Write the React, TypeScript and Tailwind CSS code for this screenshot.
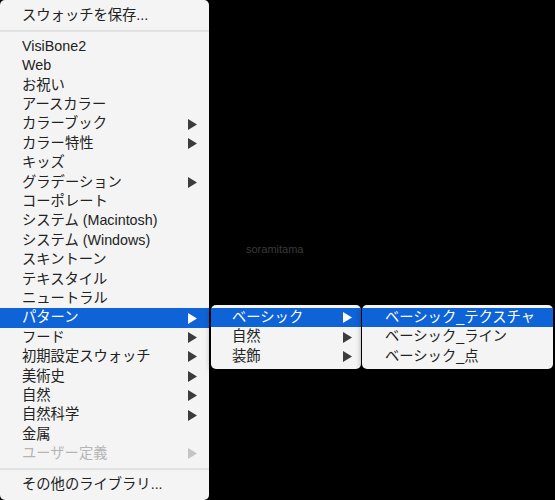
import React from "react";

type Item = { label: string; sub?: boolean; active?: boolean; disabled?: boolean };

const font = { fontFamily: '"Liberation Sans", "Noto Sans CJK JP", sans-serif' };

const libraries: Item[] = [
  { label: "VisiBone2" },
  { label: "Web" },
  { label: "お祝い" },
  { label: "アースカラー" },
  { label: "カラーブック", sub: true },
  { label: "カラー特性", sub: true },
  { label: "キッズ" },
  { label: "グラデーション", sub: true },
  { label: "コーポレート" },
  { label: "システム (Macintosh)" },
  { label: "システム (Windows)" },
  { label: "スキントーン" },
  { label: "テキスタイル" },
  { label: "ニュートラル" },
  { label: "パターン", sub: true, active: true },
  { label: "フード", sub: true },
  { label: "初期設定スウォッチ", sub: true },
  { label: "美術史", sub: true },
  { label: "自然", sub: true },
  { label: "自然科学", sub: true },
  { label: "金属" },
  { label: "ユーザー定義", sub: true, disabled: true },
];

function Arrow({ color }: { color: string }) {
  return (
    <svg width="9" height="11" viewBox="0 0 9 11" className="shrink-0">
      <path d="M0 0 L9 5.5 L0 11 Z" fill={color} />
    </svg>
  );
}

function Row({ item, pl, arrowRight }: { item: Item; pl: string; arrowRight: string }) {
  const color = item.active ? "text-white" : item.disabled ? "text-[#b4b4b4]" : "text-[#222222]";
  return (
    <div
      className={`flex items-center justify-between h-[19.4px] text-[14.3px] leading-[19.4px] ${pl} ${arrowRight} ${
        item.active ? "bg-[#0e63d7]" : ""
      } ${color}`}
    >
      <span className="whitespace-nowrap">{item.label}</span>
      {item.sub && <Arrow color={item.active ? "#ffffff" : item.disabled ? "#c4c4c4" : "#3c3c3c"} />}
    </div>
  );
}

function Separator() {
  return (
    <div className="h-[12px] flex items-center">
      <div className="h-[2px] w-full bg-[#e2e2e2]" />
    </div>
  );
}

export default function App() {
  return (
    <div className="relative w-[555px] h-[500px] bg-black overflow-hidden" style={font}>
      <div className="w-[209px] h-[500px] bg-[#f4f4f4] rounded-[5px] pt-[5.5px]">
        <Row item={{ label: "スウォッチを保存..." }} pl="pl-[22px]" arrowRight="pr-[12px]" />
        <Separator />
        {libraries.map((it) => (
          <Row key={it.label} item={it} pl="pl-[22px]" arrowRight="pr-[12px]" />
        ))}
        <Separator />
        <Row item={{ label: "その他のライブラリ..." }} pl="pl-[22px]" arrowRight="pr-[12px]" />
      </div>

      <div className="absolute left-[246px] top-[241px] text-[11px] text-[#3a3a3a]">soramitama</div>

      <div className="absolute left-[211px] top-[305px] w-[150px] h-[64px] bg-[#f4f4f4] rounded-[5px] pt-[3px] shadow-[0_2px_6px_rgba(0,0,0,0.4)]">
        <Row item={{ label: "ベーシック", sub: true, active: true }} pl="pl-[21px]" arrowRight="pr-[9px]" />
        <Row item={{ label: "自然", sub: true }} pl="pl-[21px]" arrowRight="pr-[9px]" />
        <Row item={{ label: "装飾", sub: true }} pl="pl-[21px]" arrowRight="pr-[9px]" />
      </div>

      <div className="absolute left-[362px] top-[305px] w-[191px] h-[64px] bg-[#f4f4f4] rounded-[5px] pt-[3px] shadow-[0_2px_6px_rgba(0,0,0,0.4)]">
        <Row item={{ label: "ベーシック_テクスチャ", active: true }} pl="pl-[23px]" arrowRight="pr-[9px]" />
        <Row item={{ label: "ベーシック_ライン" }} pl="pl-[23px]" arrowRight="pr-[9px]" />
        <Row item={{ label: "ベーシック_点" }} pl="pl-[23px]" arrowRight="pr-[9px]" />
      </div>
    </div>
  );
}
